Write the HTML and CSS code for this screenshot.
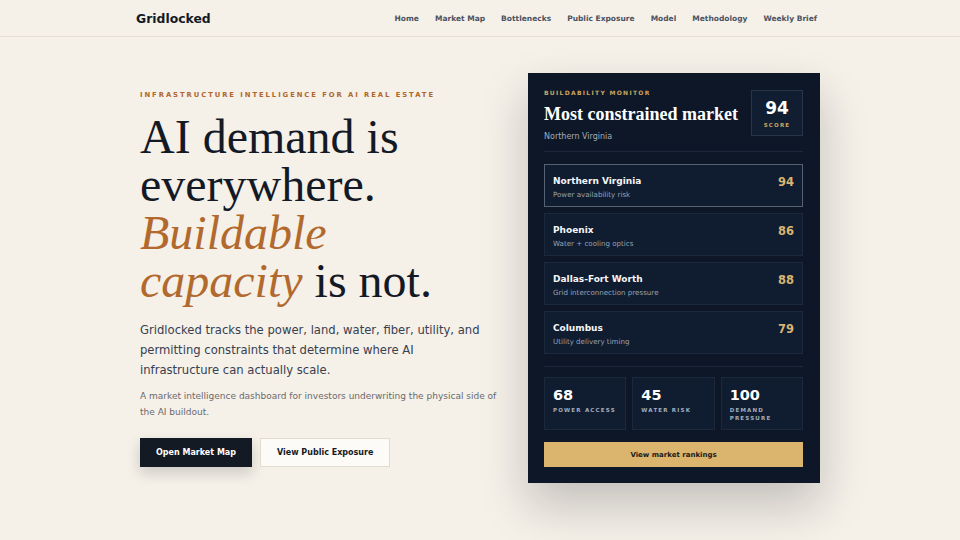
FILE: index.html
```html
<!DOCTYPE html>
<html lang="en">
<head>
  <meta charset="UTF-8">
  <title>Gridlocked</title>
  <link rel="stylesheet" href="styles.css">
</head>
<body>
  <!-- Top bar -->
  <header class="site-header">
    <div class="wrap header-inner">
      <a class="logo" href="#">Gridlocked</a>
      <nav class="nav">
        <a href="#">Home</a>
        <a href="#">Market Map</a>
        <a href="#">Bottlenecks</a>
        <a href="#">Public Exposure</a>
        <a href="#">Model</a>
        <a href="#">Methodology</a>
        <a href="#">Weekly Brief</a>
      </nav>
    </div>
  </header>

  <main class="wrap hero">
    <!-- Intro copy -->
    <section class="hero-copy">
      <p class="eyebrow">Infrastructure intelligence for AI real estate</p>
      <h1 class="headline">AI demand is everywhere. <em>Buildable capacity</em> is not.</h1>
      <p class="lead">Gridlocked tracks the power, land, water, fiber, utility, and permitting constraints that determine where AI infrastructure can actually scale.</p>
      <p class="sub">A market intelligence dashboard for investors underwriting the physical side of the AI buildout.</p>
      <div class="actions">
        <a class="btn btn-dark" href="#">Open Market Map</a>
        <a class="btn btn-light" href="#">View Public Exposure</a>
      </div>
    </section>

    <!-- Monitor card -->
    <aside class="monitor">
      <div class="monitor-head">
        <div>
          <p class="monitor-label">Buildability Monitor</p>
          <h2 class="monitor-title">Most constrained market</h2>
          <p class="monitor-sub">Northern Virginia</p>
        </div>
        <div class="score-box">
          <span class="score-num">94</span>
          <span class="score-cap">Score</span>
        </div>
      </div>

      <ul class="market-list">
        <li class="market active">
          <div>
            <div class="market-name">Northern Virginia</div>
            <div class="market-note">Power availability risk</div>
          </div>
          <span class="market-score">94</span>
        </li>
        <li class="market">
          <div>
            <div class="market-name">Phoenix</div>
            <div class="market-note">Water + cooling optics</div>
          </div>
          <span class="market-score">86</span>
        </li>
        <li class="market">
          <div>
            <div class="market-name">Dallas-Fort Worth</div>
            <div class="market-note">Grid interconnection pressure</div>
          </div>
          <span class="market-score">88</span>
        </li>
        <li class="market">
          <div>
            <div class="market-name">Columbus</div>
            <div class="market-note">Utility delivery timing</div>
          </div>
          <span class="market-score">79</span>
        </li>
      </ul>

      <div class="stats">
        <div class="stat">
          <div class="stat-num">68</div>
          <div class="stat-label">Power access</div>
        </div>
        <div class="stat">
          <div class="stat-num">45</div>
          <div class="stat-label">Water risk</div>
        </div>
        <div class="stat">
          <div class="stat-num">100</div>
          <div class="stat-label">Demand pressure</div>
        </div>
      </div>

      <a class="btn-gold" href="#">View market rankings</a>
    </aside>
  </main>
</body>
</html>
```

FILE: styles.css
```css
* {
  box-sizing: border-box;
}
html, body {
  min-height: 100%;
}
body {
  margin: 0;
  min-height: 100vh;
  background: #f5f0e8;
  color: #131a26;
  font-family: "DejaVu Sans", sans-serif;
}
a {
  text-decoration: none;
  color: inherit;
}
p, h1, h2, ul {
  margin: 0;
  padding: 0;
}
.wrap {
  width: 680px;
  margin: 0 auto;
}

/* header */
.site-header {
  height: 37px;
  border-bottom: 1px solid #e5ded1;
}
.header-inner {
  height: 36px;
  display: flex;
  align-items: center;
  justify-content: space-between;
}
.logo {
  font-weight: bold;
  font-size: 12.4px;
  color: #141a24;
  margin-left: -4px;
}
.nav {
  display: flex;
  gap: 16px;
  margin-right: 3px;
}
.nav a {
  font-size: 7.5px;
  font-weight: bold;
  color: #4b5261;
}

/* hero */
.hero {
  display: flex;
  align-items: center;
  justify-content: space-between;
  padding: 36px 0 60px;
}
.hero-copy {
  width: 362px;
}
.eyebrow {
  font-size: 6.8px;
  line-height: 10px;
  font-weight: bold;
  letter-spacing: 1.95px;
  text-transform: uppercase;
  color: #b0672c;
}
.headline {
  margin-top: 13px;
  width: 330px;
  font-family: "Liberation Serif", serif;
  font-weight: normal;
  font-size: 48px;
  line-height: 48px;
  color: #131a26;
}
.headline em {
  color: #b2692d;
}
.lead {
  margin-top: 15px;
  max-width: 348px;
  font-size: 11.6px;
  line-height: 20px;
  color: #374050;
}
.sub {
  margin-top: 8px;
  font-size: 9px;
  line-height: 16px;
  color: #6a6a6e;
}
.actions {
  margin-top: 18px;
  display: flex;
  gap: 8px;
}
.btn {
  display: inline-flex;
  align-items: center;
  height: 29px;
  padding: 0 16px;
  font-size: 8px;
  font-weight: bold;
}
.btn-dark {
  background: #141a24;
  color: #fff;
  box-shadow: 0 6px 14px rgba(20, 26, 36, 0.18);
}
.btn-light {
  background: #fdfbf7;
  color: #141a24;
  border: 1px solid #e3dbcc;
}

/* monitor card */
.monitor {
  width: 292px;
  padding: 17px 17px 16px 16px;
  background: #0d1727;
  color: #f3f4f6;
  box-shadow: 0 22px 44px rgba(18, 24, 34, 0.22);
}
.monitor-head {
  display: flex;
  justify-content: space-between;
  align-items: flex-start;
  padding-bottom: 9px;
  border-bottom: 1px solid #1d283a;
}
.monitor-label {
  font-size: 6px;
  line-height: 8px;
  font-weight: bold;
  letter-spacing: 1.3px;
  text-transform: uppercase;
  color: #cda660;
  margin-top: -1px;
}
.monitor-title {
  margin-top: 6px;
  font-family: "Liberation Serif", serif;
  font-size: 18px;
  line-height: 22px;
  color: #fff;
}
.monitor-sub {
  margin-top: 7px;
  font-size: 8px;
  line-height: 10px;
  color: #a6adb9;
}
.score-box {
  width: 52px;
  height: 46px;
  padding-top: 7px;
  display: flex;
  flex-direction: column;
  align-items: center;
  background: #111d30;
  border: 1px solid #27344a;
}
.score-num {
  font-size: 17px;
  line-height: 20px;
  font-weight: bold;
  color: #fff;
}
.score-cap {
  margin-top: 3px;
  font-size: 5.5px;
  line-height: 8px;
  font-weight: bold;
  letter-spacing: 1.2px;
  text-transform: uppercase;
  color: #cda660;
}
.market-list {
  list-style: none;
  margin-top: 12px;
  display: flex;
  flex-direction: column;
  gap: 6px;
  padding-bottom: 12px;
  border-bottom: 1px solid #1d283a;
}
.market {
  height: 43px;
  padding: 10px 8px 0 8px;
  display: flex;
  justify-content: space-between;
  align-items: flex-start;
  background: #101c2f;
  border: 1px solid #1c283b;
}
.market.active {
  border-color: #566174;
}
.market-name {
  font-size: 9px;
  line-height: 13px;
  font-weight: bold;
  color: #f5f6f8;
}
.market-note {
  margin-top: 2px;
  font-size: 7.1px;
  line-height: 10px;
  color: #9aa3b2;
}
.market-score {
  font-size: 11.5px;
  line-height: 14px;
  font-weight: bold;
  color: #d8b472;
}
.stats {
  margin-top: 10px;
  display: grid;
  grid-template-columns: repeat(3, 1fr);
  gap: 6px;
}
.stat {
  height: 53px;
  padding: 8px 5px 6px 8px;
  background: #101c2f;
  border: 1px solid #1c283b;
}
.stat-num {
  font-size: 14.5px;
  line-height: 18px;
  font-weight: bold;
  color: #fff;
}
.stat-label {
  margin-top: 2px;
  font-size: 5.5px;
  line-height: 8px;
  font-weight: bold;
  letter-spacing: 1.2px;
  text-transform: uppercase;
  color: #a4aebd;
}
.btn-gold {
  margin-top: 12px;
  height: 25px;
  display: flex;
  align-items: center;
  justify-content: center;
  background: #dbb46d;
  color: #1a1a1a;
  font-size: 7px;
  font-weight: bold;
}
```
